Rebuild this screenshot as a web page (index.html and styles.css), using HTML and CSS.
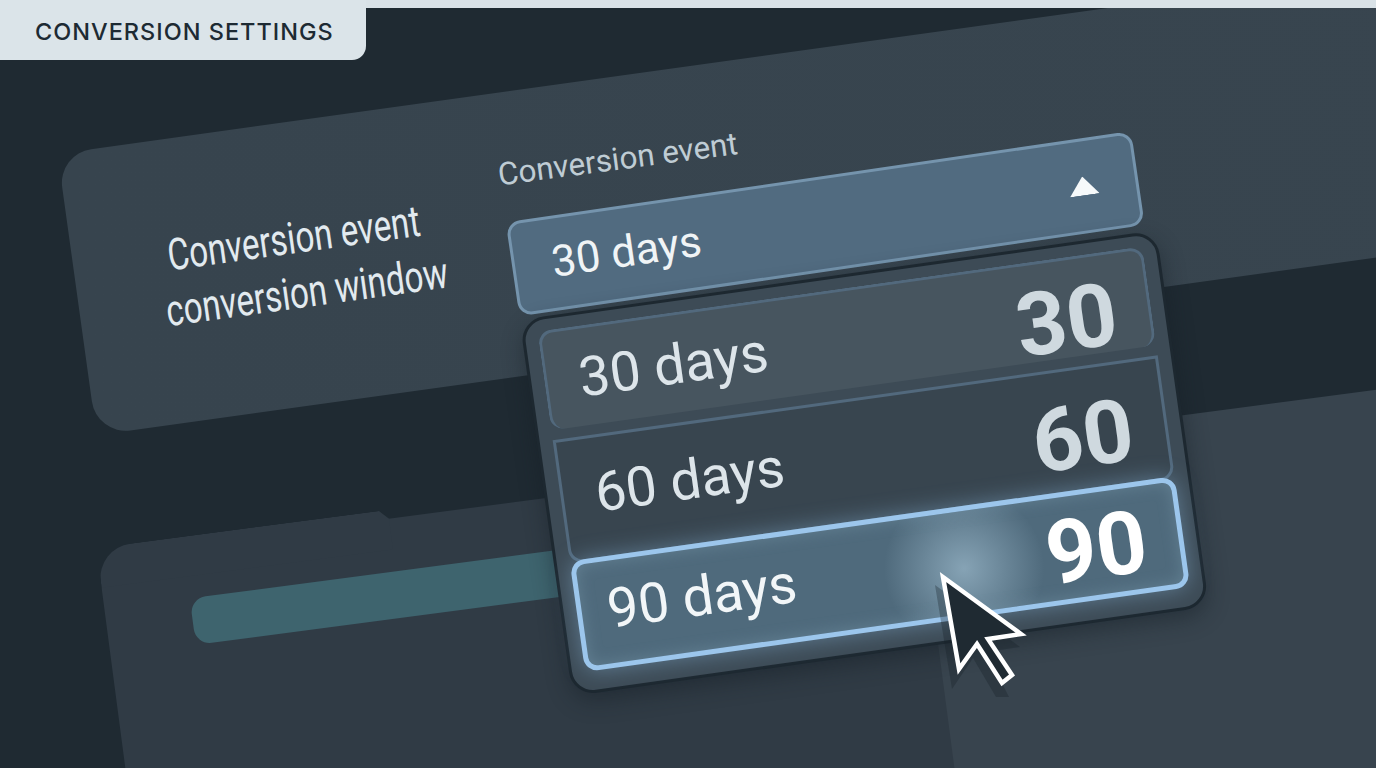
FILE: index.html
```html
<!DOCTYPE html>
<html lang="en">
<head>
    <meta charset="UTF-8">
    <meta name="viewport" content="width=device-width, initial-scale=1.0">
    <title>Conversion settings</title>
    <link rel="stylesheet" href="styles.css">
</head>
<body>
    <header class="topbar">
        <div class="tab">CONVERSION SETTINGS</div>
    </header>

    <main class="stage">
        <section class="card card-top">
            <h2 class="row-title">
                <span>Conversion event</span>
                <span class="second-line">conversion window</span>
            </h2>
        </section>

        <section class="card card-lower">
            <div class="teal-bar"></div>
        </section>
        <section class="card card-right"></section>

        <label class="field-label">Conversion event</label>
        <div class="select">
            <span>30 days</span>
            <span class="caret"></span>
        </div>

        <ul class="menu">
            <li class="option option-first"><span>30 days</span><b>30</b></li>
            <li class="option option-middle"><span>60 days</span><b>60</b></li>
            <li class="option option-active"><span>90 days</span><b>90</b></li>
        </ul>
    </main>

    <svg class="pointer" width="120" height="140" viewBox="930 565 120 140">
        <polygon class="pointer-shadow" points="935,585 1020,647 986,652 1009,697 996,697 973,658 952,689"/>
        <polygon class="pointer-body" points="943,577 1021,634 988,639 1012,675 1002,683 977,644 959,669"/>
    </svg>
</body>
</html>
```

FILE: styles.css
```css
html, body {
    height: 100%;
}
body {
    margin: 0;
    overflow: hidden;
    background-color: #1f2a32;
    font-family: Roboto, "Liberation Sans", sans-serif;
    color: #dde5ea;
}

/* top strip + tab */
.topbar {
    position: relative;
    z-index: 5;
    height: 8px;
    background-color: #d9e2e7;
}
.tab {
    width: 331px;
    height: 58px;
    padding: 2px 0 0 35px;
    display: flex;
    align-items: center;
    background-color: #dbe4e9;
    border-bottom-right-radius: 14px;
    font-family: Inter, Roboto, sans-serif;
    font-size: 23.5px;
    font-weight: 500;
    letter-spacing: 1px;
    color: #1d2a33;
}

/* everything below is drawn on one tilted sheet */
.stage {
    position: absolute;
    left: 0;
    top: 0;
    width: 1600px;
    height: 1000px;
    transform-origin: 0 0;
    transform: rotate(-7.5deg);
}
.card {
    position: absolute;
    box-sizing: border-box;
}
.card-top {
    left: 37px;
    top: 160px;
    width: 1600px;
    height: 284px;
    border-radius: 34px 0 0 34px;
    background: linear-gradient(90deg, #37444e, #38454f);
    transform-origin: 0 0;
    transform: rotate(-0.4deg);
}
.row-title {
    margin: 0;
    padding: 89px 0 0 95px;
    font-size: 44px;
    font-weight: 450;
    line-height: 55px;
    color: #e2eaef;
}
.row-title span {
    display: block;
    width: 500px;
    transform-origin: 0 50%;
    transform: scaleX(0.755);
}
.row-title .second-line {
    margin-left: -9px;
}
.card-lower {
    left: 24px;
    top: 565px;
    width: 830px;
    height: 500px;
    border-top-left-radius: 34px;
    background-color: #303b45;
}
.card-lower::before {
    content: "";
    position: absolute;
    left: 0;
    top: -9px;
    width: 294px;
    height: 40px;
    border-radius: 34px 0 0 0;
    background-color: #303b45;
    clip-path: polygon(0 0, 285px 0, 100% 9px, 100% 100%, 0 100%);
}
.teal-bar {
    position: absolute;
    left: 86px;
    top: 53px;
    width: 600px;
    height: 47px;
    border-radius: 16px;
    background-color: #3e646e;
}
.card-right {
    left: 846px;
    top: 566px;
    width: 800px;
    height: 500px;
    background-color: #38444e;
}

/* select */
.field-label {
    position: absolute;
    left: 471px;
    top: 220px;
    font-size: 31.5px;
    font-weight: 400;
    line-height: 38px;
    color: #bfccd4;
}
.select {
    position: absolute;
    left: 473px;
    top: 282px;
    width: 632px;
    height: 95px;
    box-sizing: border-box;
    padding: 0 37px 3px 37px;
    display: flex;
    align-items: center;
    justify-content: space-between;
    border: 3px solid #7594ad;
    border-radius: 14px;
    background-color: #516b80;
    font-size: 43.5px;
    color: #f0f4f6;
    transform: rotate(-0.8deg);
}
.caret {
    width: 30px;
    height: 19px;
    margin-top: 3px;
    background-color: #f6f9fa;
    clip-path: polygon(50% 0, 100% 100%, 0 100%);
}

/* open list */
.menu {
    position: absolute;
    left: 475px;
    top: 382px;
    width: 643px;
    height: 380px;
    box-sizing: border-box;
    margin: 0;
    padding: 11px 13px 19px;
    list-style: none;
    display: flex;
    flex-direction: column;
    border: 3px solid #1d2830;
    border-radius: 24px;
    background-color: #3d4b56;
    box-shadow: 0 8px 22px rgba(20, 28, 35, 0.45);
    transform: rotate(-0.5deg);
}
.option {
    box-sizing: border-box;
    padding: 0 32px 0 30px;
    display: flex;
    align-items: center;
    justify-content: space-between;
    border: 3px solid #52697d;
    background-color: #38454f;
    font-size: 55px;
}
.option b {
    font-size: 88px;
    font-weight: 700;
    line-height: 80px;
    color: #cfd9df;
}
.option-first {
    flex: none;
    height: 100px;
    margin-bottom: 10px;
    padding-left: 32px;
    border-bottom: 0;
    border-radius: 14px;
    background-color: #47555f;
}
.option-first b {
    margin-top: 22px;
}
.option-middle {
    flex: 1;
    min-height: 0;
    padding: 0 32px 10px 32px;
    border-radius: 0 0 14px 14px;
}
.option-middle b {
    margin-top: 25px;
}
.option-active {
    flex: none;
    height: 112px;
    position: relative;
    margin-top: -3px;
    padding: 0 32px 6px 26px;
    border: 5px solid #9cc6ec;
    border-radius: 14px;
    background: radial-gradient(circle 80px at 64% 56%, #86a3b5, rgba(134, 163, 181, 0) 100%), #4f6a7c;
    box-shadow: 0 0 22px rgba(150, 200, 240, 0.4), inset 0 0 16px rgba(150, 185, 210, 0.28);
    color: #f2f6f8;
}
.option-active b {
    margin-top: 14px;
    color: #ffffff;
}

/* mouse pointer */
.pointer {
    position: absolute;
    left: 930px;
    top: 565px;
    z-index: 4;
}
.pointer-shadow {
    fill: rgba(20, 30, 38, 0.3);
}
.pointer-body {
    fill: #1f2a32;
    stroke: #ffffff;
    stroke-width: 4.5;
    stroke-linejoin: miter;
}
```
